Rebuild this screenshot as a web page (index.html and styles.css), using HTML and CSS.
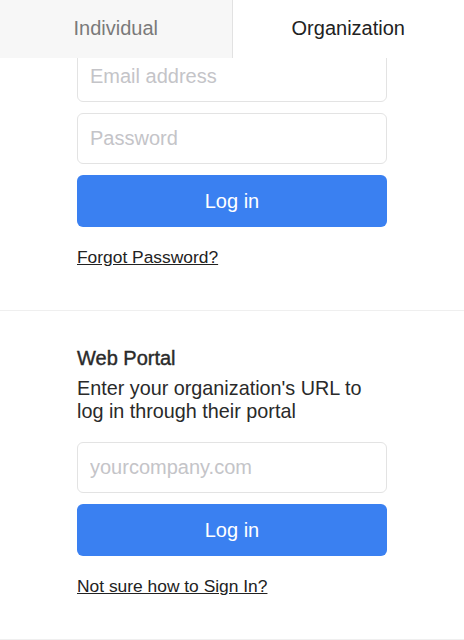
FILE: index.html
```html
<!DOCTYPE html>
<html lang="en">
<head>
    <meta charset="UTF-8">
    <meta name="viewport" content="width=device-width, initial-scale=1.0">
    <title>Sign In</title>
    <link rel="stylesheet" href="styles.css">
</head>
<body>
    <!-- Account type tabs -->
    <nav class="tabs">
        <div class="tab">Individual</div>
        <div class="tab active">Organization</div>
    </nav>

    <!-- Organization login -->
    <section class="panel first">
        <input class="field" type="email" placeholder="Email address">
        <input class="field" type="password" placeholder="Password">
        <button class="btn">Log in</button>
        <a class="link" href="#">Forgot Password?</a>
    </section>

    <!-- Web portal login -->
    <section class="panel">
        <h2 class="title">Web Portal</h2>
        <p class="desc">Enter your organization's URL to log in through their portal</p>
        <input class="field" type="text" placeholder="yourcompany.com">
        <button class="btn">Log in</button>
        <a class="link" href="#">Not sure how to Sign In?</a>
    </section>
</body>
</html>
```

FILE: styles.css
```css
body {
    font-family: "Liberation Sans", Arial, sans-serif;
    margin: 0;
    background-color: #fff;
    color: #262626;
}
.tabs {
    position: fixed;
    top: 0;
    left: 0;
    right: 0;
    height: 58px;
    display: flex;
    z-index: 2;
}
.tab {
    flex: 1;
    display: flex;
    align-items: center;
    justify-content: center;
    font-size: 20px;
    color: #7a7a7a;
    background-color: #f7f7f7;
    border-right: 1px solid #e2e2e2;
    padding-bottom: 2px;
}
.tab.active {
    background-color: #fff;
    color: #222;
    border-right: none;
}
.panel {
    display: flex;
    flex-direction: column;
    gap: 11px;
    padding: 36px 77px 43px;
    border-bottom: 1px solid #efefef;
}
.panel.first {
    padding-top: 51px;
}
.field {
    box-sizing: border-box;
    height: 51px;
    padding: 0 12px;
    font-family: inherit;
    font-size: 20px;
    color: #222;
    border: 1px solid #e3e3e3;
    border-radius: 6px;
    outline: none;
}
.field::placeholder {
    color: #c4c4c8;
}
.btn {
    height: 52px;
    font-family: inherit;
    font-size: 20px;
    color: white;
    background-color: #3a80f1;
    border: none;
    border-radius: 6px;
    cursor: pointer;
}
.link {
    align-self: flex-start;
    margin-top: 9px;
    font-size: 17.4px;
    line-height: 20px;
    color: #222;
    text-decoration: underline;
}
.title {
    margin: 0;
    font-size: 20px;
    line-height: 23px;
    font-weight: normal;
    -webkit-text-stroke: 0.4px #2a2a2a;
    color: #2a2a2a;
}
.desc {
    margin: -4px 0 8px;
    font-size: 19.8px;
    line-height: 23px;
    color: #2a2a2a;
}
```
